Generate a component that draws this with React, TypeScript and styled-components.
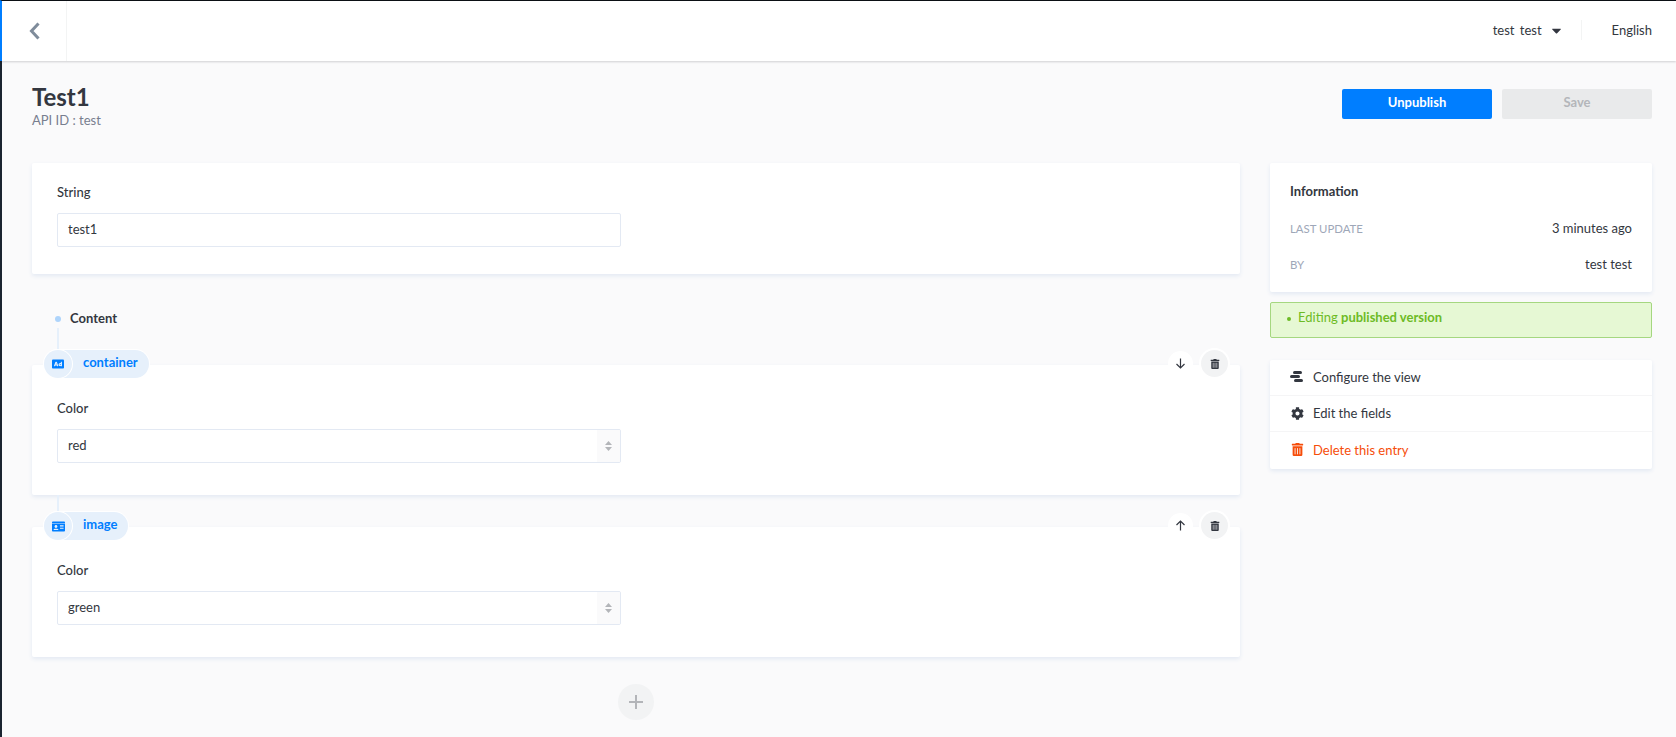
import { createGlobalStyle, styled } from "styled-components";
import { FaAd, FaCaretDown, FaCog, FaIdCard, FaTrashAlt } from "react-icons/fa";
import { ReactNode } from "react";

const GlobalStyle = createGlobalStyle`
  * { box-sizing: border-box; }
  html, body { margin: 0; padding: 0; height: 100%; overflow: hidden; }
  body {
    font-family: Lato, "Open Sans", sans-serif;
    font-size: 13px;
    color: #333740;
    background: #fafafb;
  }
`;

const Page = styled.div`
  width: 1676px;
  height: 737px;
  display: flex;
  flex-direction: column;
  overflow: hidden;
`;

const Header = styled.header`
  height: 61px;
  flex: none;
  display: flex;
  align-items: stretch;
  justify-content: space-between;
  background: #fff;
  border-top: 1px solid #0b0f14;
  border-left: 2px solid #007eff;
  box-shadow: 0 1px 2px rgba(40, 42, 49, 0.2);
  position: relative;
  z-index: 3;
`;

const BackCell = styled.div`
  width: 65px;
  display: flex;
  align-items: center;
  justify-content: center;
  border-right: 1px solid #f3f4f4;
`;

const HeaderRight = styled.div`
  display: flex;
  align-items: center;
  padding-right: 24px;
  padding-bottom: 2px;
  color: #333740;
`;

const UserMenu = styled.div`
  display: flex;
  align-items: center;
  gap: 7px;
  padding-right: 17px;
  height: 20px;
  border-right: 1px solid #f3f4f4;
  margin-right: 30px;
  word-spacing: 2px;
`;

const Body = styled.div`
  flex: 1;
  display: flex;
  min-height: 0;
`;

const Rail = styled.div`
  width: 2px;
  flex: none;
  background: #1a2430;
`;

const Main = styled.main`
  flex: 1;
  padding: 20px 24px 0 30px;
  min-width: 0;
`;

const TitleBar = styled.div`
  display: flex;
  justify-content: space-between;
  height: 82px;
`;

const TitleBlock = styled.div`
  padding-top: 3px;
`;

const Title = styled.h1`
  margin: 0;
  font-size: 24px;
  line-height: 26px;
  font-weight: 700;
  color: #333740;
`;

const SubTitle = styled.p`
  margin: 2px 0 0;
  font-size: 13px;
  line-height: 16px;
  color: #787e8f;
`;

const HeaderActions = styled.div`
  display: flex;
  gap: 10px;
  padding-top: 8px;
`;

const ActionButton = styled.button<{ $primary?: boolean }>`
  width: 150px;
  height: 30px;
  border: 0;
  border-radius: 2px;
  font-family: inherit;
  font-size: 13px;
  font-weight: 700;
  padding: 0 0 5px;
  color: ${({ $primary }) => ($primary ? "#fff" : "#b4b6ba")};
  background: ${({ $primary }) => ($primary ? "#007eff" : "#e9eaeb")};
`;

const Columns = styled.div`
  display: grid;
  grid-template-columns: 1208px 382px;
  column-gap: 30px;
  align-items: start;
`;

const Column = styled.div`
  display: flex;
  flex-direction: column;
`;

const Card = styled.section`
  background: #fff;
  border-radius: 2px;
  box-shadow: 0 2px 4px #e3e9f3;
`;

const FieldCard = styled(Card)`
  padding: 21px 25px 27px;
`;

const ComponentCard = styled(Card)`
  padding: 35px 25px 32px;
`;

const Label = styled.label`
  display: block;
  font-size: 13px;
  line-height: 16px;
  font-weight: 500;
  color: #333740;
  margin-bottom: 13px;
`;

const InputBox = styled.div`
  width: 564px;
  height: 34px;
  display: flex;
  align-items: center;
  justify-content: space-between;
  padding-left: 10px;
  border: 1px solid #e3e9f3;
  border-radius: 2px;
  background: #fff;
  font-size: 13px;
  color: #333740;
  overflow: hidden;
`;

const InputValue = styled.span`
  padding-bottom: 2px;
`;

const Stepper = styled.div`
  width: 23px;
  height: 100%;
  background: #fafafb;
  display: flex;
  align-items: center;
  justify-content: center;
  color: #b3b5b9;
`;

const ContentTitle = styled.div`
  display: flex;
  align-items: center;
  gap: 9px;
  margin: 34px 0 0 23px;
  height: 20px;
  font-weight: 700;
  font-size: 13px;
  color: #333740;
`;

const Dot = styled.span`
  width: 6px;
  height: 6px;
  border-radius: 50%;
  background: #aed4fb;
  margin-top: 2px;
`;

const Connector = styled.div<{ $height: number }>`
  width: 2px;
  height: ${({ $height }) => $height}px;
  margin-left: 25px;
  background: #e6f0fb;
`;

const ComponentHead = styled.div`
  display: flex;
  align-items: flex-start;
  justify-content: space-between;
  height: 28px;
  margin-bottom: -13px;
  position: relative;
  z-index: 1;
`;

const Pill = styled.div`
  display: flex;
  align-items: center;
  height: 28px;
  margin-left: 12px;
  padding-right: 11px;
  border-radius: 14px;
  background: #e6f0fb;
  box-shadow: 0 0 0 1px #fff;
  color: #007eff;
  font-weight: 700;
  font-size: 13px;
`;

const PillName = styled.span`
  padding-bottom: 4px;
`;

const PillIcon = styled.span`
  width: 28px;
  height: 28px;
  border-radius: 50%;
  margin-right: 11px;
  display: flex;
  align-items: center;
  justify-content: center;
  background: #e6f0fb;
  box-shadow: 0 0 0 1px #fff;
`;

const HeadActions = styled.div`
  display: flex;
  align-items: center;
  gap: 10px;
  margin-right: 12px;
`;

const RoundButton = styled.span<{ $plain?: boolean }>`
  width: ${({ $plain }) => ($plain ? "21px" : "27px")};
  height: ${({ $plain }) => ($plain ? "21px" : "27px")};
  border-radius: 50%;
  display: flex;
  align-items: center;
  justify-content: center;
  color: #333740;
  background: ${({ $plain }) => ($plain ? "#fff" : "#f2f3f4")};
  box-shadow: 0 0 0 2px #fff;
  font-size: 10px;
`;

const AddRow = styled.div`
  margin-top: 27px;
  display: flex;
  justify-content: center;
`;

const AddButton = styled.span`
  width: 36px;
  height: 36px;
  border-radius: 50%;
  background: #f2f3f4;
  display: flex;
  align-items: center;
  justify-content: center;
`;

const InfoCard = styled(Card)`
  height: 129px;
  padding: 20px 20px 0;
`;

const InfoTitle = styled.h2`
  margin: 0 0 21px;
  font-size: 13px;
  line-height: 16px;
  font-weight: 700;
  color: #333740;
`;

const InfoRow = styled.div`
  display: flex;
  justify-content: space-between;
  height: 36px;
  line-height: 16px;
  font-size: 13px;
`;

const InfoKey = styled.span`
  font-size: 11.4px;
  color: #9ea7b8;
  text-transform: uppercase;
  padding-top: 1px;
`;

const StatusBar = styled.div`
  height: 36px;
  margin-top: 10px;
  padding: 0 16px 6px;
  display: flex;
  align-items: center;
  gap: 7px;
  background: #e6f8d4;
  border: 1px solid #a5d780;
  border-radius: 2px;
  color: #6dbb25;
  font-size: 13px;
`;

const StatusDot = styled.span`
  width: 4px;
  height: 4px;
  margin-top: 4px;
  border-radius: 50%;
  background: #6dbb25;
`;

const ActionsCard = styled(Card)`
  margin-top: 22px;
  height: 109px;
`;

const ActionRow = styled.div<{ $danger?: boolean }>`
  height: 36px;
  display: flex;
  align-items: center;
  padding-left: 20px;
  padding-bottom: 1px;
  color: ${({ $danger }) => ($danger ? "#f64d0a" : "#333740")};
  border-bottom: ${({ $danger }) => ($danger ? "0" : "1px solid #f5f5f6")};
`;

const ActionIcon = styled.span`
  width: 14px;
  margin-right: 9px;
  display: flex;
  justify-content: center;
  font-size: 13px;
`;

function BackIcon() {
  return (
    <svg width="11" height="18" viewBox="0 0 11 18" fill="none" stroke="#7f8c9b" strokeWidth="3">
      <path d="M9.5 1.5L2.5 9l7 7.5" />
    </svg>
  );
}

function ArrowIcon({ up }: { up?: boolean }) {
  return (
    <svg width="11" height="11" viewBox="0 0 11 11" fill="none" stroke="#333740" strokeWidth="1.2">
      {up ? <path d="M5.5 10.5V1M1.5 5l4-4 4 4" /> : <path d="M5.5.5V10M1.5 6l4 4 4-4" />}
    </svg>
  );
}

function StepperIcon() {
  return (
    <svg width="7" height="10" viewBox="0 0 7 10" fill="currentColor">
      <path d="M3.5 0L7 4H0zM0 6h7L3.5 10z" />
    </svg>
  );
}

function PlusIcon() {
  return (
    <svg width="14" height="14" viewBox="0 0 14 14" fill="none" stroke="#b3b5b9" strokeWidth="2">
      <path d="M7 0v14M0 7h14" />
    </svg>
  );
}

function LayoutIcon() {
  return (
    <svg width="14" height="12" viewBox="0 0 14 12" fill="#333740">
      <rect x="3" y="0" width="9" height="3" rx="1.5" />
      <rect x="0" y="4" width="10" height="3" rx="1.5" />
      <rect x="4" y="8" width="9" height="3" rx="1.5" />
    </svg>
  );
}

function ComponentBlock({
  name,
  icon,
  value,
  up,
}: {
  name: string;
  icon: ReactNode;
  value: string;
  up?: boolean;
}) {
  return (
    <>
      <ComponentHead>
        <Pill>
          <PillIcon>{icon}</PillIcon>
          <PillName>{name}</PillName>
        </Pill>
        <HeadActions>
          <RoundButton $plain>
            <ArrowIcon up={up} />
          </RoundButton>
          <RoundButton>
            <FaTrashAlt />
          </RoundButton>
        </HeadActions>
      </ComponentHead>
      <ComponentCard>
        <Label>Color</Label>
        <InputBox>
          <InputValue>{value}</InputValue>
          <Stepper>
            <StepperIcon />
          </Stepper>
        </InputBox>
      </ComponentCard>
    </>
  );
}

export default function App() {
  return (
    <Page>
      <GlobalStyle />
      <Header>
        <BackCell>
          <BackIcon />
        </BackCell>
        <HeaderRight>
          <UserMenu>
            test test
            <FaCaretDown size={15} />
          </UserMenu>
          English
        </HeaderRight>
      </Header>
      <Body>
        <Rail />
        <Main>
          <TitleBar>
            <TitleBlock>
              <Title>Test1</Title>
              <SubTitle>API ID : test</SubTitle>
            </TitleBlock>
            <HeaderActions>
              <ActionButton $primary>Unpublish</ActionButton>
              <ActionButton>Save</ActionButton>
            </HeaderActions>
          </TitleBar>
          <Columns>
            <Column>
              <FieldCard>
                <Label>String</Label>
                <InputBox>
                  <InputValue>test1</InputValue>
                </InputBox>
              </FieldCard>
              <ContentTitle>
                <Dot />
                Content
              </ContentTitle>
              <Connector $height={22} />
              <ComponentBlock
                name="container"
                value="red"
                icon={<FaAd color="#007eff" size={12} />}
              />
              <Connector $height={17} />
              <ComponentBlock
                name="image"
                value="green"
                up
                icon={<FaIdCard color="#007eff" size={13} />}
              />
              <AddRow>
                <AddButton>
                  <PlusIcon />
                </AddButton>
              </AddRow>
            </Column>
            <Column>
              <InfoCard>
                <InfoTitle>Information</InfoTitle>
                <InfoRow>
                  <InfoKey>Last update</InfoKey>
                  <span>3 minutes ago</span>
                </InfoRow>
                <InfoRow>
                  <InfoKey>By</InfoKey>
                  <span>test test</span>
                </InfoRow>
              </InfoCard>
              <StatusBar>
                <StatusDot />
                <span>
                  Editing <b>published version</b>
                </span>
              </StatusBar>
              <ActionsCard>
                <ActionRow>
                  <ActionIcon>
                    <LayoutIcon />
                  </ActionIcon>
                  Configure the view
                </ActionRow>
                <ActionRow>
                  <ActionIcon>
                    <FaCog />
                  </ActionIcon>
                  Edit the fields
                </ActionRow>
                <ActionRow $danger>
                  <ActionIcon>
                    <FaTrashAlt />
                  </ActionIcon>
                  Delete this entry
                </ActionRow>
              </ActionsCard>
            </Column>
          </Columns>
        </Main>
      </Body>
    </Page>
  );
}
